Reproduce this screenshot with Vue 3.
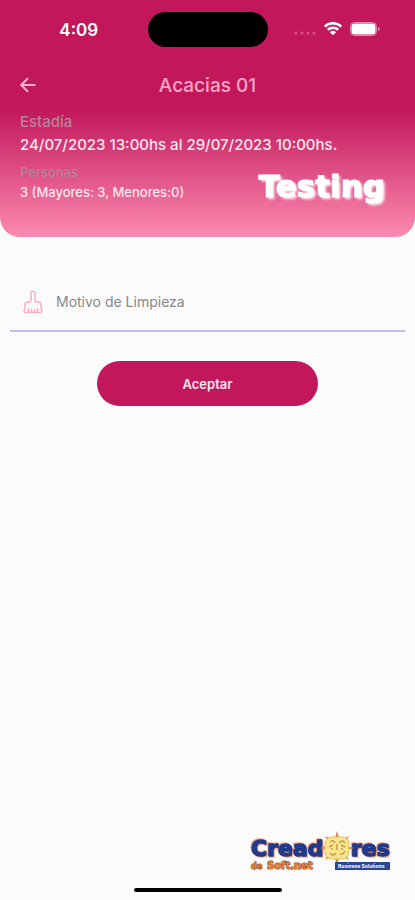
<script setup>
import { ref } from 'vue'

const reason = ref('')
const room = 'Acacias 01'
const stay = '24/07/2023 13:00hs al 29/07/2023 10:00hs.'
const guests = '3 (Mayores: 3, Menores:0)'
const sunRays = [0, 45, 90, 135, 180, 225, 270, 315]
</script>

<template>
  <div class="screen">
    <header class="header">
      <div class="status">
        <span class="time">4:09</span>
        <span class="island"></span>
        <span class="indicators">
          <svg class="signal" viewBox="0 0 22 4" aria-hidden="true">
            <circle cx="2" cy="2" r="1.6" /><circle cx="8" cy="2" r="1.6" />
            <circle cx="14" cy="2" r="1.6" /><circle cx="20" cy="2" r="1.6" />
          </svg>
          <svg class="wifi" viewBox="0 0 20 15" aria-hidden="true">
            <path d="M1.7 5.6a12 12 0 0 1 16.6 0M4.8 8.8a7.5 7.5 0 0 1 10.4 0" />
            <path class="dot" d="M10 14.3 6.9 11.2a4.5 4.5 0 0 1 6.2 0Z" />
          </svg>
          <svg class="battery" viewBox="0 0 31 14" aria-hidden="true">
            <rect class="shell" x="0.5" y="0.5" width="26" height="13" rx="4" />
            <rect class="charge" x="1.5" y="1.5" width="24" height="11" rx="3" />
            <path class="cap" d="M28 5c2.4.4 2.4 3.600 0 4Z" />
          </svg>
        </span>
      </div>

      <nav class="bar">
        <button class="back" type="button" aria-label="Volver">
          <svg viewBox="0 0 16 16" aria-hidden="true"><path d="M15.500 8H1.500M8 1.200 1.200 8 8 14.800" /></svg>
        </button>
        <h1 class="title">{{ room }}</h1>
      </nav>

      <div class="details">
        <p class="label">Estadía</p>
        <p class="stay">{{ stay }}</p>
        <div class="guest-row">
          <div>
            <p class="label small">Personas</p>
            <p class="guests">{{ guests }}</p>
          </div>
          <strong class="brand">Testing</strong>
        </div>
      </div>
    </header>

    <main class="form">
      <label class="field">
        <svg class="broom" viewBox="0 0 20 24" aria-hidden="true">
          <path d="M8 12V3.200a2 2 0 0 1 4 0V12M8 12H5Q2 12 2 15v3L1.200 20.500Q1 22.500 3 22.500H17Q19 22.500 18.800 20.500L18 18v-3Q18 12 15 12H12M5.500 22v-4M8.500 22v-3M11.500 22v-3M14.500 22v-4" />
        </svg>
        <input v-model="reason" class="input" type="text" placeholder="Motivo de Limpieza" aria-label="Motivo de Limpieza" />
      </label>
      <button class="accept" type="button">Aceptar</button>
    </main>

    <footer class="footer">
      <svg class="logo" viewBox="0 0 146 44" role="img" aria-label="Creadores de Soft.net">
        <g class="words">
          <text class="word" x="4" y="26">Cread</text>
          <text class="word" x="104" y="26">res</text>
        </g>
        <g class="sun">
          <path v-for="a in sunRays" :key="a" class="ray" d="M90 1 88 8h4Z" :transform="`rotate(${a} 90 18)`" />
          <rect x="78" y="7" width="24" height="22" rx="7" />
          <path class="motif" d="M83 12q3-3 5 1m4 0q3-4 6 0M82 17l4-2m8 0 4 2M90 14v6M83 23q3 4 6 0m4 1q3 1 5-3M84 19h2m8 0h2" />
        </g>
        <text class="soft" x="4" y="39">de</text>
        <text class="soft large" x="20" y="39">Soft.net</text>
        <rect class="plate" x="88" y="32" width="55" height="8" />
        <text class="tagline" x="91" y="38">Business Solutions</text>
      </svg>
      <span class="home"></span>
    </footer>
  </div>
</template>

<style>
body {
  margin: 0;
  background: #fbfbfb;
}
</style>

<style scoped>
.screen {
  display: flex;
  flex-direction: column;
  min-height: 100vh;
  background: #fbfbfb;
  font-family: Inter, "Liberation Sans", sans-serif;
}
p,
h1 {
  margin: 0;
  font-weight: 400;
}
svg {
  display: block;
}
.header {
  padding-bottom: 31px;
  border-radius: 0 0 20px 20px;
  background: linear-gradient(180deg, #c2185b 0, #c2185b 110px, #fc8ab0 100%);
  color: #fff;
}
.status {
  display: grid;
  grid-template-columns: 1fr 120px 1fr;
  align-items: center;
  padding-top: 12px;
  height: 35px;
}
.time {
  padding-left: 10px;
  text-align: center;
  font-size: 17px;
  font-weight: 600;
}
.island {
  height: 35px;
  border-radius: 18px;
  background: #000;
}
.indicators {
  display: flex;
  align-items: center;
  justify-content: flex-end;
  gap: 7px;
  padding: 0 34px 2px 0;
}
.signal {
  width: 22px;
  height: 4px;
  margin-top: 9px;
  fill: #d65086;
}
.wifi {
  width: 20px;
  height: 15px;
  fill: none;
  stroke: #fff;
  stroke-width: 2.600;
}
.wifi .dot {
  fill: #fff;
  stroke: none;
}
.battery {
  width: 31px;
  height: 14px;
  fill: #fff;
}
.battery .shell {
  fill: none;
  stroke: #e58aae;
}
.battery .cap {
  fill: #e58aae;
}
.bar {
  display: grid;
  grid-template-columns: 56px 1fr 56px;
  align-items: center;
  padding-top: 14px;
  height: 48px;
}
.back {
  display: flex;
  justify-content: center;
  padding: 8px 0;
  border: 0;
  background: none;
}
.back svg {
  width: 16px;
  height: 16px;
  fill: none;
  stroke: #fbb0cd;
  stroke-width: 2;
}
.title {
  text-align: center;
  font-size: 19px;
  font-weight: 500;
  color: #f8a5c5;
}
.details {
  padding: 1px 20px 0;
}
.label {
  padding-top: 2px;
  line-height: 20px;
  font-size: 15px;
  font-weight: 500;
  color: #b6839b;
}
.label.small {
  padding-top: 0;
  font-size: 13px;
}
.stay {
  padding: 3px 0 5px;
  line-height: 20px;
  font-size: 15px;
  font-weight: 500;
  color: #ffe6f0;
  white-space: nowrap;
}
.guest-row {
  display: flex;
  justify-content: space-between;
  align-items: flex-start;
  padding-top: 2px;
}
.guests {
  line-height: 20px;
  font-size: 13px;
  font-weight: 500;
  color: #ffe6f0;
}
.brand {
  padding: 4px 10px 0 0;
  line-height: 40px;
  font-family: "DejaVu Sans", sans-serif;
  font-size: 31px;
  font-weight: 700;
  -webkit-text-stroke: 1px #fff;
  text-shadow: 2px 2px 3px #fff;
}
.form {
  display: flex;
  flex-direction: column;
  align-items: center;
  gap: 29px;
  padding: 37px 10px 0;
}
.field {
  box-sizing: border-box;
  display: flex;
  align-items: center;
  gap: 13px;
  width: 100%;
  height: 58px;
  padding-left: 13px;
  border-bottom: 2px solid #c4bee0;
}
.broom {
  width: 20px;
  height: 24px;
  fill: none;
  stroke: #f8b0c6;
  stroke-width: 1.500;
}
.input {
  flex: 1;
  min-width: 0;
  padding: 0;
  border: 0;
  outline: 0;
  background: none;
  font: 400 14px/20px Inter, "Liberation Sans", sans-serif;
  color: #333;
}
.input::placeholder {
  color: #888;
  opacity: 1;
}
.accept {
  width: 56%;
  height: 45px;
  border: 0;
  border-radius: 23px;
  background: #c2185b;
  font: 600 13px/20px Inter, "Liberation Sans", sans-serif;
  color: #ffe6f0;
}
.footer {
  display: flex;
  flex-direction: column;
  gap: 14px;
  margin-top: auto;
  padding: 0 22px 8px;
}
.logo {
  align-self: flex-end;
  width: 146px;
  height: 44px;
  overflow: visible;
}
.words {
  filter: drop-shadow(1px 1px 0 #f3a27c) drop-shadow(-1px -1px 0 #f3a27c);
}
.word {
  font: 700 22px "DejaVu Sans", sans-serif;
  fill: #203a8c;
  stroke: #203a8c;
  stroke-width: 1.500;
  stroke-linejoin: round;
}
.sun rect {
  fill: #f8e58c;
  stroke: #e6bd55;
}
.sun .ray {
  fill: #d8824c;
}
.sun .motif {
  fill: none;
  stroke: #c99d45;
  stroke-width: 1.500;
}
.soft {
  font: 700 8px "DejaVu Sans", sans-serif;
  fill: #e9802e;
  stroke: #7a4630;
  stroke-width: 1;
  paint-order: stroke;
}
.soft.large {
  font-size: 10px;
}
.plate {
  fill: #2b4594;
}
.tagline {
  font: 700 5px Inter, sans-serif;
  fill: #fff;
}
.home {
  align-self: center;
  width: 148px;
  height: 4px;
  border-radius: 2px;
  background: #000;
}
</style>
